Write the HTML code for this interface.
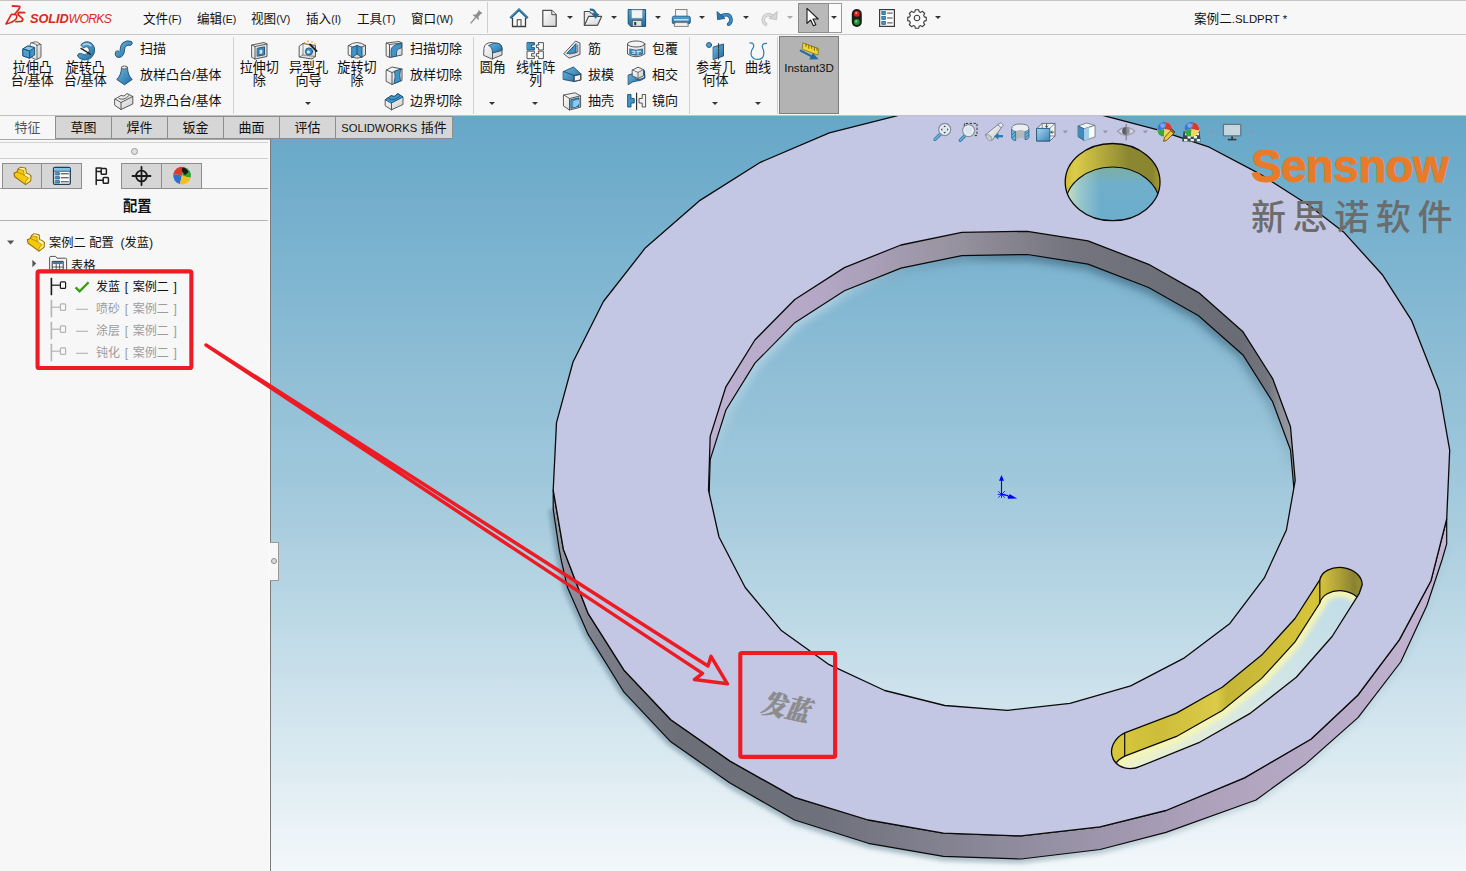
<!DOCTYPE html>
<html lang="zh-CN"><head><meta charset="utf-8"><title>SOLIDWORKS - 案例二.SLDPRT</title>
<style>
html,body{margin:0;padding:0;}
body{width:1466px;height:871px;overflow:hidden;position:relative;background:#f7f7f7;
 font-family:"Liberation Sans","Noto Sans CJK SC",sans-serif;font-size:12.5px;color:#111;}
.a{position:absolute;}
.t{position:absolute;white-space:nowrap;line-height:14px;}
.c{position:absolute;text-align:center;white-space:nowrap;line-height:13px;width:70px;}
.sm{font-size:10.5px;}
.vsep{position:absolute;width:1px;background:#d0d0d0;}
.hsep{position:absolute;height:1px;background:#c6c6c6;}
.tab{position:absolute;z-index:5;top:116px;height:21px;border:1px solid #8e8e8e;border-left:none;background:#d6d6d6;
 text-align:center;line-height:21px;font-size:13px;}
.dd{position:absolute;width:0;height:0;border-left:3px solid transparent;border-right:3px solid transparent;border-top:3px solid #333;}
.ptab{position:absolute;top:163px;height:26px;border:1px solid #8e8e8e;background:#d6d6d6;box-sizing:border-box;}
svg{position:absolute;overflow:visible;}
</style></head><body>
<div class="a" style="left:0;top:0;width:1466px;height:1px;background:#c4c4c4"></div>
<div class="a" style="left:0;top:34px;width:1466px;height:1px;background:#c9c9c9"></div>
<div class="t" style="left:30px;top:11.8px;font-size:12.8px;color:#da291c;font-style:italic;letter-spacing:-0.1px"><b>SOLID</b><span style="letter-spacing:-0.7px;font-size:12.2px">WORKS</span></div>
<div class="t" style="left:143px;top:12px;font-size:12.6px">文件<span class="sm">(F)</span></div>
<div class="t" style="left:197px;top:12px;font-size:12.6px">编辑<span class="sm">(E)</span></div>
<div class="t" style="left:251px;top:12px;font-size:12.6px">视图<span class="sm">(V)</span></div>
<div class="t" style="left:306px;top:12px;font-size:12.6px">插入<span class="sm">(I)</span></div>
<div class="t" style="left:357px;top:12px;font-size:12.6px">工具<span class="sm">(T)</span></div>
<div class="t" style="left:411px;top:12px;font-size:12.6px">窗口<span class="sm">(W)</span></div>
<div class="t" style="left:1194px;top:12px;font-size:12.6px">案例二<span style="font-size:11.4px">.SLDPRT *</span></div>
<div class="vsep" style="left:487px;top:2px;height:31px;background:#cfcfcf"></div>
<div class="a" style="left:798px;top:3px;width:44px;height:30px;box-sizing:border-box;border:1px solid #9a9a9a;background:#fbfbfb"></div>
<div class="a" style="left:798px;top:3px;width:31px;height:30px;box-sizing:border-box;border:1px solid #8c8c8c;background:#b9b9b9"></div>
<div class="dd" style="left:567px;top:16px;border-top-color:#333"></div>
<div class="dd" style="left:611px;top:16px;border-top-color:#333"></div>
<div class="dd" style="left:655px;top:16px;border-top-color:#333"></div>
<div class="dd" style="left:699px;top:16px;border-top-color:#333"></div>
<div class="dd" style="left:743px;top:16px;border-top-color:#333"></div>
<div class="dd" style="left:787px;top:16px;border-top-color:#aaa"></div>
<div class="dd" style="left:831px;top:16px;border-top-color:#333"></div>
<div class="dd" style="left:935px;top:16px;border-top-color:#333"></div>
<svg style="left:0;top:0" width="1466" height="35" viewBox="0 0 1466 35">
<defs>
<linearGradient id="gPaper" x1="0" y1="0" x2="1" y2="1"><stop offset="0" stop-color="#ffffff"/><stop offset="1" stop-color="#d2d2d2"/></linearGradient>
<linearGradient id="gBlue" x1="0" y1="0" x2="0" y2="1"><stop offset="0" stop-color="#5aa7d6"/><stop offset="1" stop-color="#1d6a9c"/></linearGradient>
</defs>
<!-- DS mark -->
<g fill="none" stroke="#da291c" stroke-width="1.8" stroke-linecap="round" stroke-linejoin="round">
<path d="M12.5 6 L19.2 6.3 Q20.6 7 18.6 9.5 L15 14"/>
<path d="M6 24 L11.5 14.2 L15.5 14.6 Q18 15.6 16 19 Q13 22.5 6 24 Z" stroke-width="1.6"/>
<path d="M24.6 12.6 L19.2 12.4 Q17.2 13.4 18.8 15.4 L22.3 18.4 Q23.6 20.4 21.4 21.3 L16 21.6"/>
</g>
<!-- pin -->
<g transform="translate(476 17) rotate(40)"><path d="M-2.6 -7 h5.2 l-0.9 1.6 v3.6 l2.5 2.4 h-8.4 l2.5 -2.4 v-3.6 z" fill="#8d8d8d"/><path d="M0 0.6 V8.4" stroke="#8d8d8d" stroke-width="1.3"/></g>
<!-- home -->
<g><path d="M512.5 18 V26.5 H525.5 V18" fill="#fafafa" stroke="#3c3c3c" stroke-width="1.3"/>
<path d="M510.3 18.2 L519 9.7 L527.7 18.2" fill="none" stroke="#1f5f8b" stroke-width="2.4" stroke-linejoin="miter"/>
<path d="M510.3 17.6 L519 9.2 L527.7 17.6" fill="none" stroke="#4f9ccc" stroke-width="0.9"/>
<rect x="517.2" y="19.7" width="3.8" height="6.6" fill="#fff" stroke="#3c3c3c" stroke-width="1"/></g>
<!-- new doc -->
<path d="M542.8 10.3 H551.8 L556.2 14.7 V26.3 H542.8 Z" fill="url(#gPaper)" stroke="#4a4a4a" stroke-width="1.2" stroke-linejoin="round"/>
<path d="M551.8 10.3 V14.7 H556.2" fill="#eee" stroke="#4a4a4a" stroke-width="1"/>
<!-- open -->
<g><path d="M584.3 11.5 H589.5 L591 13.2 H597 V25.3 H584.3 Z" fill="#e9e9e9" stroke="#4a4a4a" stroke-width="1.1" stroke-linejoin="round"/>
<path d="M584.5 25.3 L588.6 16.4 H601.6 L597.6 25.3 Z" fill="url(#gPaper)" stroke="#4a4a4a" stroke-width="1.1" stroke-linejoin="round"/>
<path d="M589.8 9.6 Q595.4 9.2 595.6 14.4" fill="none" stroke="#1f6b9e" stroke-width="2.2"/>
<path d="M591.7 14 H599.5 L595.6 18.8 Z" fill="#1f6b9e"/></g>
<!-- save -->
<g><path d="M628.2 9.6 H645.6 V26.4 H630.8 L628.2 23.8 Z" fill="url(#gBlue)" stroke="#174f76" stroke-width="1"/>
<rect x="631.6" y="9.9" width="10.8" height="8.3" fill="#f3f3f3" stroke="#8a9aa6" stroke-width="0.6"/>
<rect x="632.4" y="20.6" width="9.4" height="5.6" fill="#e2e2e2" stroke="#555" stroke-width="0.7"/>
<rect x="634.2" y="22" width="2" height="3.2" fill="#333"/></g>
<!-- print -->
<g><rect x="675.6" y="9.6" width="11.4" height="7.4" fill="#f6f6f6" stroke="#777" stroke-width="0.9"/>
<rect x="672.3" y="16.2" width="18" height="7.6" rx="1.6" fill="url(#gBlue)" stroke="#1d5f8c" stroke-width="0.9"/>
<rect x="674" y="19" width="14.6" height="1.6" fill="#bfe0f4"/>
<path d="M675 22.6 H687.6 L688.4 26.4 H674.2 Z" fill="#f4f4f4" stroke="#777" stroke-width="0.9"/></g>
<!-- undo -->
<g><path d="M721.4 16 Q729.8 12.4 731 19.4 Q731.3 22.4 728.6 24.2" fill="none" stroke="#1b5e8d" stroke-width="3.6" stroke-linecap="round"/>
<path d="M721.4 16 Q729.8 12.4 731 19.4 Q731.3 22.4 728.6 24.2" fill="none" stroke="#3d8fc4" stroke-width="2" stroke-linecap="round"/>
<path d="M717 11.6 L717.6 19.6 L725 18.4 Z" fill="#2b79ad" stroke="#1b5e8d" stroke-width="0.9" stroke-linejoin="round"/></g>
<!-- redo (disabled) -->
<g><path d="M772.8 16 Q764.4 12.4 763.2 19.4 Q762.9 22.4 765.6 24.2" fill="none" stroke="#c2c2c2" stroke-width="3.4" stroke-linecap="round"/>
<path d="M772.8 16 Q764.4 12.4 763.2 19.4 Q762.9 22.4 765.6 24.2" fill="none" stroke="#dedede" stroke-width="1.8" stroke-linecap="round"/>
<path d="M777.2 11.6 L776.6 19.6 L769.2 18.4 Z" fill="#d6d6d6" stroke="#c0c0c0" stroke-width="0.9" stroke-linejoin="round"/></g>
<!-- cursor -->
<path d="M807 8.4 V23.4 L810.6 20 L813.4 25.8 L815.8 24.7 L813.1 19 L818.2 19 Z" fill="#fff" stroke="#1a1a1a" stroke-width="1.1" stroke-linejoin="round"/>
<!-- traffic light -->
<g><rect x="851.8" y="9" width="10" height="18" rx="5" fill="#1c1c1c"/>
<circle cx="856.8" cy="13.8" r="2.9" fill="#e02020"/><circle cx="856.2" cy="13" r="1" fill="#ff9a9a"/>
<circle cx="856.8" cy="22" r="2.9" fill="#1f9a2a"/><circle cx="856.2" cy="21.2" r="1" fill="#8fe08f"/></g>
<!-- options -->
<g><rect x="879.6" y="9.6" width="14.8" height="16.8" fill="#fbfbfb" stroke="#3a3a3a" stroke-width="1.2"/>
<g fill="#3d8fc4" stroke="#1b5e8d" stroke-width="0.7"><rect x="881.8" y="11.6" width="3.6" height="3"/><rect x="881.8" y="16.5" width="3.6" height="3"/><rect x="881.8" y="21.4" width="3.6" height="3"/></g>
<g stroke="#444" stroke-width="1"><path d="M887.2 13.1 H892.6 M887.2 18 H892.6 M887.2 22.9 H892.6"/></g></g>
<!-- gear -->
<g transform="translate(917 18)"><path d="M-1.6 -8.3 h3.2 l0.5 2 l1.6 0.7 l1.8 -1.1 l2.2 2.2 l-1.1 1.8 l0.7 1.6 l2 0.5 v3.2 l-2 0.5 l-0.7 1.6 l1.1 1.8 l-2.2 2.2 l-1.8 -1.1 l-1.6 0.7 l-0.5 2 h-3.2 l-0.5 -2 l-1.6 -0.7 l-1.8 1.1 l-2.2 -2.2 l1.1 -1.8 l-0.7 -1.6 l-2 -0.5 v-3.2 l2 -0.5 l0.7 -1.6 l-1.1 -1.8 l2.2 -2.2 l1.8 1.1 l1.6 -0.7 z" fill="#fbfbfb" stroke="#3a3a3a" stroke-width="1.1" stroke-linejoin="round"/><circle r="2.8" fill="#f7f7f7" stroke="#3a3a3a" stroke-width="1.1"/></g>
</svg>
<div class="a" style="left:0;top:115px;width:1466px;height:1px;background:#c2c2c2"></div>
<div class="vsep" style="left:233px;top:37px;height:77px"></div>
<div class="vsep" style="left:473px;top:37px;height:77px"></div>
<div class="vsep" style="left:689px;top:37px;height:77px"></div>
<div class="vsep" style="left:777px;top:37px;height:77px"></div>
<div class="a" style="left:779px;top:36px;width:60px;height:78px;box-sizing:border-box;border:1px solid #7e7e7e;background:#b3b3b3"></div>
<div class="c" style="left:774px;top:61px;font-size:11.6px">Instant3D</div>
<div class="c" style="left:-2.700000000000003px;top:61px;font-size:13.1px">拉伸凸<br>台/基体</div>
<div class="c" style="left:50.3px;top:61px;font-size:13.1px">旋转凸<br>台/基体</div>
<div class="c" style="left:224.3px;top:61px;font-size:13.1px">拉伸切<br>除</div>
<div class="c" style="left:273.6px;top:61px;font-size:13.1px">异型孔<br>向导</div>
<div class="dd" style="left:305px;top:102px"></div>
<div class="c" style="left:322px;top:61px;font-size:13.1px">旋转切<br>除</div>
<div class="c" style="left:457.8px;top:61px;font-size:13.1px">圆角<br></div>
<div class="dd" style="left:489px;top:102px"></div>
<div class="c" style="left:500.6px;top:61px;font-size:13.1px">线性阵<br>列</div>
<div class="dd" style="left:532px;top:102px"></div>
<div class="c" style="left:680.6px;top:61px;font-size:13.1px">参考几<br>何体</div>
<div class="dd" style="left:712px;top:102px"></div>
<div class="c" style="left:723px;top:61px;font-size:13.1px">曲线<br></div>
<div class="dd" style="left:755px;top:102px"></div>
<div class="t" style="left:140px;top:42px;font-size:13px">扫描</div>
<div class="t" style="left:140px;top:68px;font-size:13px">放样凸台/基体</div>
<div class="t" style="left:140px;top:94px;font-size:13px">边界凸台/基体</div>
<div class="t" style="left:410px;top:42px;font-size:13px">扫描切除</div>
<div class="t" style="left:410px;top:68px;font-size:13px">放样切除</div>
<div class="t" style="left:410px;top:94px;font-size:13px">边界切除</div>
<div class="t" style="left:588px;top:42px;font-size:13px">筋</div>
<div class="t" style="left:588px;top:68px;font-size:13px">拔模</div>
<div class="t" style="left:588px;top:94px;font-size:13px">抽壳</div>
<div class="t" style="left:652px;top:42px;font-size:13px">包覆</div>
<div class="t" style="left:652px;top:68px;font-size:13px">相交</div>
<div class="t" style="left:652px;top:94px;font-size:13px">镜向</div>
<svg style="left:0;top:0" width="1466" height="116" viewBox="0 0 1466 116">
<defs>
<linearGradient id="rB" x1="0" y1="0" x2="1" y2="1"><stop offset="0" stop-color="#6db6e0"/><stop offset="1" stop-color="#1f6d9f"/></linearGradient>
<linearGradient id="rW" x1="0" y1="0" x2="1" y2="1"><stop offset="0" stop-color="#ffffff"/><stop offset="1" stop-color="#cfcfcf"/></linearGradient>
</defs>
<g stroke-linejoin="round" stroke-linecap="round">
<!-- extrude boss -->
<g stroke="#555" stroke-width="0.9"><path d="M30.2 44.4 Q30.2 43 31.6 42.6 L35.6 41.8 Q36.6 41.7 37.4 42.2 L40.4 44 Q41 44.5 41 45.4 V56.4 Q41 57.4 40 57.8 L36.6 59.4 Q35.6 59.7 34.8 59.2 L30.2 56.6 Z" fill="url(#rW)"/><path d="M37 45.6 Q37 44.6 36 44.2 L31 42.8 M37 45.6 V59.2 M37 45.2 L40.8 44.4" fill="none" stroke-width="0.8"/></g>
<g stroke="#174f76" stroke-width="0.9"><path d="M23.2 49 L28 46 L34.6 47.6 V55 L29.6 58.2 L23.2 56 Z" fill="#3f94c8"/><path d="M23.2 49 L29.6 51 L34.6 47.6 L28 46 Z" fill="#86c6ea"/><path d="M29.6 51 V58.2" fill="none"/><path d="M23.2 49 L29.6 51 V58.2 L23.2 56 Z" fill="#4da0d2"/></g>
<!-- revolve boss -->
<g><path d="M81 44.6 Q86 39.6 91.5 43.2 Q96 47.5 94 53.5 Q91 60.5 84 59.8 Q79 59 77.4 56 Q78 53 80.6 53.4 Q84.5 56 88 53.4 Q90.5 50.5 88.6 47.6 Q86.5 45.6 83.6 47.6 Z" fill="url(#rB)" stroke="#174f76" stroke-width="0.9"/><path d="M83.5 44.8 Q87.5 42.4 91 45.6" fill="none" stroke="#bfe2f5" stroke-width="1.2"/><path d="M81 48.4 L90.4 54.2" stroke="#1a1a1a" stroke-width="1.3"/></g>
<!-- sweep -->
<path d="M115.5 52 Q114 57 119 57.5 Q124 57 124.5 50 Q125 44 130.5 45.5 Q133.5 44 131.5 41.5 Q127 39.5 122.5 43 Q120 46 120 50.5 Q119.5 52.5 117.5 51 Z" fill="url(#rB)" stroke="#174f76" stroke-width="0.9"/>
<!-- loft -->
<g stroke="#174f76" stroke-width="0.9"><path d="M121.5 67.5 Q121.5 75 116.8 79.5 L124.5 84.8 L132.2 79.5 Q127.5 75 127.5 67.5 Z" fill="url(#rB)"/><ellipse cx="124.5" cy="67.5" rx="3" ry="1.5" fill="#e8e8e8" stroke="#555"/></g>
<!-- boundary boss -->
<g stroke="#4a4a4a" stroke-width="0.9" fill="url(#rW)"><path d="M115 99 L121 95.5 Q124 97.5 127 93.5 L132.8 96.5 V104 L121 109.5 L115 105.5 Z"/><path d="M115 99 L121 102.5 L132.8 96.5 M121 102.5 V109.5" fill="none"/><path d="M119 98.6 Q124 101 129 95.5" fill="none"/></g>
<!-- extrude cut -->
<g stroke="#4a4a4a" stroke-width="0.9"><path d="M252 45 L264 42.5 L267 44 V56.5 L255 59 L252 57.5 Z" fill="url(#rW)"/><path d="M252 45 L255 46.5 L267 44 M255 46.5 V59" fill="none"/><path d="M257.5 48.2 L264.5 46.8 V54.8 L257.5 56.2 Z" fill="#3f94c8" stroke="#174f76"/><path d="M259.3 49.6 L262.8 48.9 V53.8 L259.3 54.5 Z" fill="#cfe8f6" stroke="#174f76" stroke-width="0.6"/></g>
<!-- hole wizard -->
<g stroke="#4a4a4a" stroke-width="0.9"><path d="M299.5 46 L303 43.5 L315.5 45.5 V56.5 L312 59 L299.5 57 Z" fill="url(#rW)"/><path d="M303 43.5 V55 L299.5 57 M303 55 L315.5 56.5" fill="none" stroke-width="0.6"/><circle cx="309" cy="51.5" r="3.6" fill="#3f94c8" stroke="#174f76"/><circle cx="308.4" cy="52" r="1.6" fill="#d8eef9" stroke="none"/><path d="M310 44.5 L316.5 51" stroke="#222" stroke-width="2"/></g>
<g fill="#e8a020"><circle cx="304.5" cy="42.5" r="0.8"/><circle cx="308" cy="41.3" r="0.9"/><circle cx="312" cy="42" r="0.8"/><circle cx="315" cy="44" r="0.8"/><circle cx="306" cy="44.5" r="0.6"/></g>
<!-- revolve cut -->
<g stroke="#4a4a4a" stroke-width="0.9"><path d="M348.5 45.5 Q357 39.5 365.5 45.5 V55 Q357 61.5 348.5 55 Z" fill="url(#rW)"/><path d="M348.5 45.5 Q357 50.5 365.5 45.5" fill="none"/><path d="M352 47.3 L357 45.5 L362 47.3 V57.6 L357 54 L352 57.6 Z" fill="#3f94c8" stroke="#174f76"/><path d="M357 45.5 V54" stroke="#174f76"/></g>
<!-- sweep cut -->
<g stroke="#4a4a4a" stroke-width="0.9"><path d="M386.5 43 L399 41.5 L402 43 V55 L389.5 57.5 L386.5 56 Z" fill="url(#rW)"/><path d="M386.5 43 L389.5 44.5 L402 43 M389.5 44.5 V57.5" fill="none"/><path d="M391 56.8 V50 Q392 45 399 44 L401.5 43.6 V48 Q397 48 396.5 52 V55.7 Z" fill="#3f94c8" stroke="#174f76" stroke-width="0.8"/></g>
<!-- loft cut -->
<g stroke="#4a4a4a" stroke-width="0.9"><path d="M386.5 70 L392 67 L402 69 V80.5 L392 84.5 L386.5 81.5 Z" fill="url(#rW)"/><path d="M386.5 70 L392 72.5 L402 69 M392 72.5 V84.5" fill="none"/><path d="M394.5 71.5 Q396 76 394 83.5 L400.5 81 Q399 75 400.5 69.6 Z" fill="#3f94c8" stroke="#174f76" stroke-width="0.8"/></g>
<!-- boundary cut -->
<g stroke="#4a4a4a" stroke-width="0.9"><path d="M385.5 99.5 L391.5 95.5 Q394.5 98 397.5 93.5 L403 97 V104.5 L391.5 109.8 L385.5 106 Z" fill="url(#rW)"/><path d="M385.5 99.5 L391.5 95.5 Q394.5 98 397.5 93.5 L403 97 L391.5 103 Z" fill="#3f94c8" stroke="#174f76"/><path d="M391.5 103 V109.8" fill="none"/><path d="M389 98.8 Q394.5 101.6 400 96" fill="none" stroke="#174f76" stroke-width="0.7"/></g>
<!-- fillet -->
<g stroke="#4a4a4a" stroke-width="0.9"><path d="M484 48 Q484.5 43 491 42.5 L498.5 43.5 Q502.5 45 502 50.5 V55 L492 59 L484 55.5 Z" fill="url(#rW)"/><path d="M489 45.5 Q495 42 498.8 43.6 Q502.5 45 502 50.5 L492.5 53 Q492.5 47 489 45.5 Z" fill="url(#rB)" stroke="#174f76"/><path d="M492.5 53 V59" fill="none"/></g>
<!-- linear pattern -->
<g stroke-width="0.9" stroke-linejoin="miter"><path d="M527.4 42.6 h7 v2.4 h-2.8 v2.6 h2.8 v2.4 h-7 z" fill="#3f94c8" stroke="#174f76"/><g fill="#fafafa" stroke="#444"><path d="M538.6 42.6 h4.8 v7.4 h-4.8 v-2.4 h-2.2 v-2.6 h2.2 z"/><path d="M527.4 51.2 h7 v2.4 h-2.8 v2.6 h2.8 v2.4 h-7 z"/><path d="M538.6 51.2 h4.8 v7.4 h-4.8 v-2.4 h-2.2 v-2.6 h2.2 z"/></g></g>
<!-- rib -->
<g stroke="#4a4a4a" stroke-width="0.9"><path d="M564 53.5 L575.5 41 L580 43 V54.5 L569.5 58 Z" fill="url(#rW)"/><path d="M567 53.3 L576 43.6 V52.3 Z" fill="#3f94c8" stroke="#174f76"/><path d="M569.5 54.2 L577.7 52 V45" fill="none" stroke-width="0.7"/></g>
<!-- draft -->
<g stroke="#174f76" stroke-width="0.9"><path d="M563.5 71.5 L573.5 67 L581 74 V80 L574 81.5 L563.5 79.5 Z" fill="url(#rB)"/><path d="M563.5 71.5 L574 75.5 L581 74 M574 75.5 V81.5" fill="none"/><path d="M574.5 75.8 L580.6 74.4 V79.8 L574.5 81.2 Z" fill="#f4f4f4" stroke="#444"/></g>
<!-- shell -->
<g stroke="#4a4a4a" stroke-width="0.9"><path d="M563.8 95 L575 92.8 L580.6 95.8 V107.2 L569.5 110 L563.8 106.2 Z" fill="url(#rW)"/><path d="M563.8 95 L569.5 98.5 L580.6 95.8 M569.5 98.5 V110" fill="none"/><path d="M571.2 99.6 L579 97.8 V106.2 L571.2 108.2 Z" fill="#3f94c8" stroke="#174f76"/><path d="M573.2 101 L579 99.8 V104 L576 106.8 L573.2 107.5 Z" fill="#8fcbec" stroke="none"/></g>
<!-- wrap -->
<g stroke="#4a4a4a" stroke-width="0.9"><path d="M627.5 44 V54 Q636 59.5 644.8 54 V44" fill="url(#rW)"/><ellipse cx="636.1" cy="44" rx="8.6" ry="3" fill="#f4f4f4"/><path d="M630 49 Q636 51.5 642.5 49 V54 Q636 56.5 630 54 Z" fill="#3f94c8" stroke="#174f76" stroke-width="0.7"/><path d="M632.5 51.3 h2.4 v2 h-2.4 M638 51.3 v3.2 M637 51.3 h3.6" stroke="#e8f4fb" stroke-width="0.9" fill="none"/></g>
<!-- intersect -->
<g stroke-width="0.9"><path d="M628.5 75 Q633 74 636 72 V79.5 Q640 80 644.5 77.5 V70.5 L645 78 Q640 81.5 636.5 81 Q633 81 628.5 84.5 Z" fill="url(#rB)" stroke="#174f76"/><path d="M632.5 70 L638 67.2 L643.5 69.6 V75.8 L638 78.5 L632.5 76 Z" fill="url(#rW)" stroke="#4a4a4a"/><path d="M632.5 70 L638 72.4 L643.5 69.6 M638 72.4 V78.5" fill="none" stroke="#4a4a4a" stroke-width="0.7"/></g>
<!-- mirror -->
<g stroke-width="0.9"><path d="M628 94.5 h3 v4 h3.2 v4.5 h-3.2 v4 h-3 z" fill="#3f94c8" stroke="#174f76"/><path d="M645.2 94.5 h-3 v4 h-3.2 v4.5 h3.2 v4 h3 z" fill="#f2f2f2" stroke="#444"/><path d="M636.6 93 V109.6" stroke="#222" stroke-width="1.1"/></g>
<!-- reference geometry -->
<g stroke-width="0.9"><path d="M713.5 47 L723.5 44 V56 L713.5 59.5 Z" fill="url(#rB)" stroke="#174f76"/><path d="M718.6 43.5 V60" stroke="#222" stroke-dasharray="1.6 1.2"/><circle cx="709" cy="45" r="2.5" fill="#4fa0d2" stroke="#174f76"/></g>
<!-- curves -->
<path d="M749.8 43 Q754.5 42.6 753.5 47.2 Q750 52 751.5 56 Q753.5 59.6 758 59.4 Q762.5 59.2 763.5 55.5 Q764.5 51 762.5 47.8 Q761.5 43.2 766.5 43.4" fill="none" stroke="#2c7fb2" stroke-width="1.2"/>
<!-- instant3d -->
<g><path d="M803.2 43 L818.6 48.6 L818 55 L802.6 49.4 Z" fill="#f2d432" stroke="#7a6a10" stroke-width="0.7"/><path d="M806 44.2 v2.2 M808.8 45.2 v3 M811.6 46.2 v2.2 M814.4 47.2 v3 M817 48.2 v2.2" stroke="#4a3f00" stroke-width="0.7"/><path d="M800.6 50.6 L812.5 56.8" stroke="#1f6b9e" stroke-width="2"/><path d="M809.2 59.6 L818.6 59.2 L813 53 Z" fill="#1f6b9e"/></g>
</g></svg>
<div class="a" style="left:0;top:116px;width:55px;height:23px;background:#f7f7f7;text-align:center;line-height:23px;font-size:13px;color:#555">特征</div>
<div class="tab" style="left:55px;width:55px;border-left:1px solid #8e8e8e;">草图</div>
<div class="tab" style="left:112px;width:55px;">焊件</div>
<div class="tab" style="left:168px;width:55px;">钣金</div>
<div class="tab" style="left:224px;width:55px;">曲面</div>
<div class="tab" style="left:280px;width:55px;">评估</div>
<div class="tab" style="left:336px;width:116px;"><span style="font-size:11.2px">SOLIDWORKS</span> 插件</div>
<div class="a" style="left:0;top:139px;width:268px;height:732px;background:#f7f7f7"></div>
<div class="a" style="left:268px;top:139px;width:2px;height:732px;background:#f9f9f9"></div>
<div class="a" style="left:0;top:139px;width:270px;height:1px;background:#a8a8a8"></div>
<div class="a" style="left:0;top:142px;width:268px;height:1px;background:#d2d2d2"></div>
<div class="a" style="left:0;top:158px;width:268px;height:1px;background:#cfcfcf"></div>
<div class="a" style="left:131px;top:148px;width:5px;height:5px;border-radius:50%;border:1px solid #9a9a9a;background:#e0e0e0;box-sizing:content-box"></div>
<div class="a" style="left:0;top:188px;width:268px;height:1px;background:#a6a6a6"></div>
<div class="ptab" style="left:2px;width:40px"></div>
<div class="ptab" style="left:41px;width:41px"></div>
<div class="a" style="left:82px;top:163px;width:39px;height:27px;background:#f7f7f7"></div>
<div class="ptab" style="left:121px;width:41px"></div>
<div class="ptab" style="left:161px;width:41px"></div>
<div class="t" style="left:123px;top:198px;font-size:14.3px;font-weight:bold;line-height:16px">配置</div>
<div class="a" style="left:0;top:220px;width:268px;height:1px;background:#b4b4b4"></div>
<div class="t" style="left:49px;top:236px;font-size:12.25px">案例二 配置&nbsp; (发蓝)</div>
<div class="t" style="left:71px;top:259px;font-size:12.3px">表格</div>
<div class="t" style="left:96px;top:280px;font-size:12px;color:#111;word-spacing:1.4px">发蓝 [ 案例二 ]</div>
<div class="t" style="left:96px;top:302px;font-size:12px;color:#9c9c9c;word-spacing:1.4px">喷砂 [ 案例二 ]</div>
<div class="t" style="left:96px;top:324px;font-size:12px;color:#9c9c9c;word-spacing:1.4px">涂层 [ 案例二 ]</div>
<div class="t" style="left:96px;top:346px;font-size:12px;color:#9c9c9c;word-spacing:1.4px">钝化 [ 案例二 ]</div>
<svg style="left:0;top:139px" width="270" height="240" viewBox="0 139 270 240">
<defs><linearGradient id="pY" x1="0" y1="0" x2="1" y2="1"><stop offset="0" stop-color="#ffe45a"/><stop offset="1" stop-color="#e0a800"/></linearGradient></defs>
<g stroke-linejoin="round" stroke-linecap="round">
<!-- tab1 part icon -->
<g id="partIco" stroke-linejoin="miter"><path d="M14 173.3 L17 171.9 L18.1 169.2 L20.5 167.4 L25.6 168.2 L26.3 173.3 L28.6 174 L31 176 L30.7 180.8 L25.6 184.6 L14.7 176.8 Z" fill="#f5c90c" stroke="#96690a" stroke-width="1.1"/>
<path d="M18.5 169.3 L20.6 167.8 L25.2 168.5 L23.3 170.2 Z" fill="#fff6c4"/><path d="M23.5 170.4 L25.3 168.8 L25.9 173.2 L23.9 174.9 Z" fill="#ffe768"/>
<path d="M24.1 175.3 L26.2 173.6 L28.4 174.4 L30.4 176.1 L28.3 177.8 Z" fill="#fff6c4"/><path d="M28.4 178.3 L30.5 176.6 L30.2 180.5 L25.9 183.7 L25.7 181.6 Z" fill="#ffe768"/>
<path d="M18.1 169.2 L23.4 170.2 L24 175.1 L28.4 178 L25.5 181.6 L25.6 184.6 M17 171.9 L24 175.1" fill="none" stroke="#a87c08" stroke-width="0.7"/></g>
<!-- tab2 property icon -->
<g><rect x="53.5" y="167.4" width="16.8" height="17" rx="1.4" fill="#fdfdfd" stroke="#1f3f5c" stroke-width="1.3"/><rect x="54.1" y="168" width="15.6" height="2.8" fill="#7ec4e8"/><path d="M53.5 171.2 H70.3" stroke="#1f3f5c" stroke-width="0.9"/>
<g fill="#4a9ccc" stroke="#1b4e7d" stroke-width="0.7"><rect x="55.6" y="172.6" width="3.8" height="2.4"/><rect x="55.6" y="176.6" width="3.8" height="2.4"/><rect x="55.6" y="180.6" width="3.8" height="2.4"/></g><path d="M61.2 173.8 H68.4 M61.2 177.8 H68.4 M61.2 181.8 H68.4" stroke="#333" stroke-width="1"/></g>
<!-- tab3 config icon -->
<g fill="#fafafa" stroke="#1e1e1e" stroke-width="1.5"><path d="M96.2 168 V184.6 M97 171.5 H102 M97 180.3 H104" fill="none"/><path d="M97 168 h4.2" fill="none"/><rect x="101.2" y="168.6" width="5.2" height="5.6" rx="0.8"/><rect x="103.2" y="177.6" width="5.2" height="5.6" rx="0.8"/></g>
<!-- tab4 crosshair -->
<g fill="none" stroke="#1a1a1a"><circle cx="141.5" cy="176" r="5.4" stroke-width="1.8"/><path d="M141.5 167 V185 M132.5 176 H150.5" stroke-width="1.8"/></g>
<!-- tab5 appearance ball -->
<g><circle cx="182" cy="175.5" r="8.8" fill="#e8e8e8"/><path d="M182 175.5 L173.3 174 A8.8 8.8 0 0 1 184 166.9 Z" fill="#e03a2a"/><path d="M182 175.5 L173.3 174 A8.8 8.8 0 0 0 180 184.1 Z" fill="#2e6fd0"/><path d="M182 175.5 L180 184.1 A8.8 8.8 0 0 0 190.6 177.5 Z" fill="#f0c020"/><path d="M182 175.5 L190.6 177.5 A8.8 8.8 0 0 0 184 166.9 Z" fill="#2fa33a"/><ellipse cx="185.6" cy="172" rx="2.6" ry="5" transform="rotate(-38 185.6 172)" fill="#1a1a1a"/><path d="M180 184.1 A8.8 8.8 0 0 0 190.6 177.5 L182 175.5 Z" fill="#f0c020"/><path d="M184.2 176 L190.6 177.5 A8.8 8.8 0 0 0 189.6 171 Z" fill="#2fa33a"/></g>
<!-- tree arrows -->
<path d="M7 240.4 H14.2 L10.6 244.4 Z" fill="#555" stroke="none"/>
<path d="M32.4 259.8 L36.2 263.5 L32.4 267.2 Z" fill="#555" stroke="none"/>
<!-- tree part icon -->
<use href="#partIco" transform="translate(13.4 66.5)"/>
<!-- folder/table icon -->
<g><path d="M49.6 269.5 V257.6 Q49.6 256.4 50.8 256.4 H55.6 L57 258.2 H65.4 Q66.6 258.2 66.6 259.4 V269.5" fill="#f4f4f4" stroke="#555" stroke-width="1"/><rect x="52.6" y="261.4" width="10.6" height="8.4" fill="#fff" stroke="#333" stroke-width="1"/><rect x="53.1" y="261.9" width="9.6" height="2.2" fill="#2f7fb4"/><path d="M56.2 264.4 V269.6 M59.6 264.4 V269.6 M52.8 267 H63" stroke="#333" stroke-width="0.8"/></g>
</g>
<g fill="none" stroke="#1a1a1a" stroke-width="1.2"><path d="M51.4 277.8 V295.2" stroke-width="1.6"/><path d="M52 285.2 H60.4"/><rect x="60.4" y="281.8" width="5.2" height="6.6" rx="1" fill="#f7f7f7"/></g>
<path d="M75.6 287.40000000000003 L79.6 291.40000000000003 L88.6 282.2" fill="none" stroke="#3a9c14" stroke-width="2.3" stroke-linejoin="miter"/>
<g fill="none" stroke="#b4b4b4" stroke-width="1.2"><path d="M51.4 299.8 V317.2" stroke-width="1.6"/><path d="M52 307.2 H60.4"/><rect x="60.4" y="303.8" width="5.2" height="6.6" rx="1" fill="#f7f7f7"/></g>
<path d="M76 309.3 H88" stroke="#b8b8b8" stroke-width="1.2"/>
<g fill="none" stroke="#b4b4b4" stroke-width="1.2"><path d="M51.4 321.8 V339.2" stroke-width="1.6"/><path d="M52 329.2 H60.4"/><rect x="60.4" y="325.8" width="5.2" height="6.6" rx="1" fill="#f7f7f7"/></g>
<path d="M76 331.3 H88" stroke="#b8b8b8" stroke-width="1.2"/>
<g fill="none" stroke="#b4b4b4" stroke-width="1.2"><path d="M51.4 343.8 V361.2" stroke-width="1.6"/><path d="M52 351.2 H60.4"/><rect x="60.4" y="347.8" width="5.2" height="6.6" rx="1" fill="#f7f7f7"/></g>
<path d="M76 353.3 H88" stroke="#b8b8b8" stroke-width="1.2"/>
</svg>
<svg style="left:270px;top:116px;overflow:hidden" width="1196" height="755" viewBox="270 116 1196 755">
<defs>
<linearGradient id="bg" gradientUnits="userSpaceOnUse" x1="0" y1="116" x2="0" y2="871"><stop offset="0" stop-color="#66a7c8"/><stop offset="0.5" stop-color="#a2c9dc"/><stop offset="1" stop-color="#f3f8fa"/></linearGradient>
<linearGradient id="gSide" gradientUnits="userSpaceOnUse" x1="553" y1="0" x2="1447" y2="0"><stop offset="0" stop-color="#9a9ba8"/><stop offset="0.05" stop-color="#7c7e8a"/><stop offset="0.14" stop-color="#6c6e78"/><stop offset="0.3" stop-color="#6e707b"/><stop offset="0.5" stop-color="#8d8a9b"/><stop offset="0.72" stop-color="#aca0bb"/><stop offset="1" stop-color="#c3b5d3"/></linearGradient>
<linearGradient id="gWall" gradientUnits="userSpaceOnUse" x1="708" y1="0" x2="1295" y2="0"><stop offset="0" stop-color="#beb1d1"/><stop offset="0.2" stop-color="#b3a7c5"/><stop offset="0.42" stop-color="#97929f"/><stop offset="0.62" stop-color="#73747e"/><stop offset="0.9" stop-color="#6a6c75"/><stop offset="0.955" stop-color="#74767f"/><stop offset="0.975" stop-color="#8e9099"/><stop offset="1" stop-color="#9a9ca6"/></linearGradient>
<linearGradient id="gYel" gradientUnits="userSpaceOnUse" x1="1066" y1="0" x2="1160" y2="0"><stop offset="0" stop-color="#d0be34"/><stop offset="0.1" stop-color="#dccc4c"/><stop offset="0.2" stop-color="#cdbf44"/><stop offset="0.45" stop-color="#aaa23a"/><stop offset="0.66" stop-color="#8c8832"/><stop offset="0.92" stop-color="#8a8530"/><stop offset="1" stop-color="#a99d30"/></linearGradient>
<clipPath id="cInner"><path d="M961.8 232.4 L900.9 245.0 L844.4 267.6 L794.8 299.5 L754.9 340.0 L725.9 386.8 L710.2 436.4 L708.5 490.1 L719.0 537.0 L745.2 587.5 L781.0 630.2 L829.2 664.7 L884.7 690.5 L944.7 705.5 L1007.5 710.4 L1070.0 703.3 L1130.7 685.9 L1184.5 657.8 L1229.9 623.4 L1264.3 577.9 L1286.4 530.0 L1295.2 480.5 L1290.5 426.8 L1272.6 378.6 L1243.0 331.8 L1198.6 292.6 L1148.6 264.3 L1088.0 240.9 L1027.4 231.3 Z"/></clipPath>
<linearGradient id="gShadow" gradientUnits="userSpaceOnUse" x1="708" y1="0" x2="1295" y2="0"><stop offset="0" stop-color="#dde8f4" stop-opacity="0.7"/><stop offset="0.22" stop-color="#c8dcec" stop-opacity="0.6"/><stop offset="0.36" stop-color="#6a8ca4" stop-opacity="0.4"/><stop offset="0.5" stop-color="#34566c" stop-opacity="0.6"/><stop offset="1" stop-color="#34566c" stop-opacity="0.62"/></linearGradient>
<linearGradient id="gOutSh" gradientUnits="userSpaceOnUse" x1="553" y1="0" x2="1447" y2="0"><stop offset="0" stop-color="#4f6f84" stop-opacity="0.5"/><stop offset="0.5" stop-color="#4f6f84" stop-opacity="0.42"/><stop offset="0.8" stop-color="#4f6f84" stop-opacity="0.15"/><stop offset="1" stop-color="#4f6f84" stop-opacity="0.05"/></linearGradient>
<linearGradient id="gSlotGlow" gradientUnits="userSpaceOnUse" x1="1110" y1="0" x2="1365" y2="0"><stop offset="0" stop-color="#f2f5c0" stop-opacity="0.85"/><stop offset="0.3" stop-color="#f0f4c4" stop-opacity="0.55"/><stop offset="0.6" stop-color="#eef3c8" stop-opacity="0.2"/><stop offset="1" stop-color="#eef3c8" stop-opacity="0"/></linearGradient>
<linearGradient id="gShM" gradientUnits="userSpaceOnUse" x1="0" y1="330" x2="0" y2="480"><stop offset="0" stop-color="#fff"/><stop offset="1" stop-color="#000"/></linearGradient>
<mask id="mSh" maskUnits="userSpaceOnUse" x="690" y="220" width="620" height="520"><rect x="690" y="220" width="620" height="520" fill="url(#gShM)"/></mask>
<clipPath id="cInnerB"><path d="M961.8 255.6 L900.9 268.2 L844.4 290.8 L794.8 322.7 L754.9 363.2 L725.9 410.0 L710.2 459.6 L708.5 513.3 L719.0 560.2 L745.2 610.7 L781.0 653.4 L829.2 687.9 L884.7 713.7 L944.7 728.7 L1007.5 733.6 L1070.0 726.5 L1130.7 709.1 L1184.5 681.0 L1229.9 646.6 L1264.3 601.1 L1286.4 553.2 L1295.2 503.7 L1290.5 450.0 L1272.6 401.8 L1243.0 355.0 L1198.6 315.8 L1148.6 287.5 L1088.0 264.1 L1027.4 254.5 Z"/></clipPath>
<filter id="blur4" x="-20%" y="-20%" width="140%" height="140%"><feGaussianBlur stdDeviation="4"/></filter>
<filter id="blur2" x="-20%" y="-20%" width="140%" height="140%"><feGaussianBlur stdDeviation="2.2"/></filter>
<linearGradient id="gHoleBg" gradientUnits="userSpaceOnUse" x1="0" y1="165" x2="0" y2="222"><stop offset="0" stop-color="#7fae9c"/><stop offset="0.35" stop-color="#6fafcc"/><stop offset="1" stop-color="#6dadcd"/></linearGradient>
<linearGradient id="gHoleGlow" gradientUnits="userSpaceOnUse" x1="1066" y1="0" x2="1100" y2="0"><stop offset="0" stop-color="#e8f0b8" stop-opacity="0.8"/><stop offset="0.4" stop-color="#cfe6c8" stop-opacity="0.45"/><stop offset="1" stop-color="#cfe6c8" stop-opacity="0"/></linearGradient>
<linearGradient id="gYel2" gradientUnits="userSpaceOnUse" x1="1110" y1="0" x2="1364" y2="0"><stop offset="0" stop-color="#d9c83c"/><stop offset="0.2" stop-color="#cdbd3a"/><stop offset="0.42" stop-color="#dccb48"/><stop offset="0.46" stop-color="#c6b636"/><stop offset="0.8" stop-color="#d6c43a"/><stop offset="0.84" stop-color="#d0be3c"/><stop offset="0.9" stop-color="#b0a238"/><stop offset="0.96" stop-color="#8a8230"/><stop offset="1" stop-color="#9c9234"/></linearGradient>
<linearGradient id="gSlotBg" gradientUnits="userSpaceOnUse" x1="0" y1="560" x2="0" y2="750"><stop offset="0" stop-color="#bddbe8"/><stop offset="1" stop-color="#d7e8f0"/></linearGradient>
</defs>
<rect x="270" y="116" width="1196" height="755" fill="url(#bg)"/>
<path d="M553.2 509.4 L559.2 549.4 L561.2 560.0 L567.5 587.5 L588.2 634.4 L624.0 692.2 L670.8 741.8 L730.0 783.1 L794.6 820.0 L868.3 843.3 L943.4 856.4 L1021.0 859.0 L1100.0 849.5 L1166.0 832.4 L1256.0 800.0 L1305.7 763.9 L1358.0 717.6 L1400.7 662.0 L1426.9 605.5 L1442.0 560.0 L1446.7 543.9" fill="none" stroke="url(#gOutSh)" stroke-width="9" filter="url(#blur2)"/>
<path d="M553.2 490.1 L563.4 549.4 L567.5 560.0 L588.2 613.7 L624.0 670.2 L670.8 719.8 L730.0 761.1 L794.6 797.4 L868.3 820.0 L943.4 833.2 L1021.0 835.9 L1100.0 826.9 L1166.0 810.5 L1245.0 777.6 L1311.2 739.0 L1358.0 695.0 L1399.3 639.9 L1431.0 580.7 L1446.7 519.0 L1446.7 543.9 L1442.0 560.0 L1426.9 605.5 L1400.7 662.0 L1358.0 717.6 L1305.7 763.9 L1256.0 800.0 L1166.0 832.4 L1100.0 849.5 L1021.0 859.0 L943.4 856.4 L868.3 843.3 L794.6 820.0 L730.0 783.1 L670.8 741.8 L624.0 692.2 L588.2 634.4 L567.5 587.5 L561.2 560.0 L559.2 549.4 L553.2 509.4 Z" fill="url(#gSide)" stroke="#0a0a0a" stroke-width="1.2" stroke-linejoin="round"/>
<path d="M892.6 116.9 L829.3 132.9 L760.4 162.3 L699.2 200.9 L645.5 247.7 L603.4 301.5 L573.0 362.0 L556.5 422.6 L553.2 490.1 L563.4 549.4 L567.5 560.0 L588.2 613.7 L624.0 670.2 L670.8 719.8 L730.0 761.1 L794.6 797.4 L868.3 820.0 L943.4 833.2 L1021.0 835.9 L1100.0 826.9 L1166.0 810.5 L1245.0 777.6 L1311.2 739.0 L1358.0 695.0 L1399.3 639.9 L1431.0 580.7 L1446.7 519.0 L1449.7 450.2 L1439.3 391.0 L1411.7 320.7 L1382.8 275.3 L1344.2 232.6 L1308.4 205.0 L1258.8 173.4 L1209.3 147.2 L1156.9 129.6 L1108.4 116.9 L1071.0 106.7 L1000.0 98.0 L930.0 107.0 Z" fill="#c4c7e3" stroke="#0a0a0a" stroke-width="1.3" stroke-linejoin="round"/>
<path d="M961.8 232.4 L900.9 245.0 L844.4 267.6 L794.8 299.5 L754.9 340.0 L725.9 386.8 L710.2 436.4 L708.5 490.1 L719.0 537.0 L745.2 587.5 L781.0 630.2 L829.2 664.7 L884.7 690.5 L944.7 705.5 L1007.5 710.4 L1070.0 703.3 L1130.7 685.9 L1184.5 657.8 L1229.9 623.4 L1264.3 577.9 L1286.4 530.0 L1295.2 480.5 L1290.5 426.8 L1272.6 378.6 L1243.0 331.8 L1198.6 292.6 L1148.6 264.3 L1088.0 240.9 L1027.4 231.3 Z" fill="url(#gWall)"/>
<g clip-path="url(#cInner)"><path d="M961.8 255.6 L900.9 268.2 L844.4 290.8 L794.8 322.7 L754.9 363.2 L725.9 410.0 L710.2 459.6 L708.5 513.3 L719.0 560.2 L745.2 610.7 L781.0 653.4 L829.2 687.9 L884.7 713.7 L944.7 728.7 L1007.5 733.6 L1070.0 726.5 L1130.7 709.1 L1184.5 681.0 L1229.9 646.6 L1264.3 601.1 L1286.4 553.2 L1295.2 503.7 L1290.5 450.0 L1272.6 401.8 L1243.0 355.0 L1198.6 315.8 L1148.6 287.5 L1088.0 264.1 L1027.4 254.5 Z" fill="url(#bg)"/><g clip-path="url(#cInnerB)"><g mask="url(#mSh)"><path d="M961.8 255.6 L900.9 268.2 L844.4 290.8 L794.8 322.7 L754.9 363.2 L725.9 410.0 L710.2 459.6 L708.5 513.3 L719.0 560.2 L745.2 610.7 L781.0 653.4 L829.2 687.9 L884.7 713.7 L944.7 728.7 L1007.5 733.6 L1070.0 726.5 L1130.7 709.1 L1184.5 681.0 L1229.9 646.6 L1264.3 601.1 L1286.4 553.2 L1295.2 503.7 L1290.5 450.0 L1272.6 401.8 L1243.0 355.0 L1198.6 315.8 L1148.6 287.5 L1088.0 264.1 L1027.4 254.5 Z" fill="none" stroke="url(#gShadow)" stroke-width="11" filter="url(#blur4)"/></g></g><path d="M961.8 255.6 L900.9 268.2 L844.4 290.8 L794.8 322.7 L754.9 363.2 L725.9 410.0 L710.2 459.6 L708.5 513.3 L719.0 560.2 L745.2 610.7 L781.0 653.4 L829.2 687.9 L884.7 713.7 L944.7 728.7 L1007.5 733.6 L1070.0 726.5 L1130.7 709.1 L1184.5 681.0 L1229.9 646.6 L1264.3 601.1 L1286.4 553.2 L1295.2 503.7 L1290.5 450.0 L1272.6 401.8 L1243.0 355.0 L1198.6 315.8 L1148.6 287.5 L1088.0 264.1 L1027.4 254.5 Z" fill="none" stroke="#0a0a0a" stroke-width="1.2"/></g>
<path d="M961.8 232.4 L900.9 245.0 L844.4 267.6 L794.8 299.5 L754.9 340.0 L725.9 386.8 L710.2 436.4 L708.5 490.1 L719.0 537.0 L745.2 587.5 L781.0 630.2 L829.2 664.7 L884.7 690.5 L944.7 705.5 L1007.5 710.4 L1070.0 703.3 L1130.7 685.9 L1184.5 657.8 L1229.9 623.4 L1264.3 577.9 L1286.4 530.0 L1295.2 480.5 L1290.5 426.8 L1272.6 378.6 L1243.0 331.8 L1198.6 292.6 L1148.6 264.3 L1088.0 240.9 L1027.4 231.3 Z" fill="none" stroke="#0a0a0a" stroke-width="1.3" stroke-linejoin="round"/>
<clipPath id="cHole"><ellipse cx="1112.6" cy="182.1" rx="47.4" ry="38.6"/></clipPath>
<g clip-path="url(#cHole)"><rect x="1060" y="140" width="106" height="86" fill="url(#gYel)"/><ellipse cx="1112.6" cy="205.6" rx="47.4" ry="38.6" fill="url(#gHoleBg)"/><ellipse cx="1112.6" cy="205.6" rx="47.4" ry="38.6" fill="url(#gHoleGlow)"/><ellipse cx="1112.6" cy="205.6" rx="47.4" ry="38.6" fill="none" stroke="#0a0a0a" stroke-width="1.2"/></g>
<ellipse cx="1112.6" cy="182.1" rx="47.4" ry="38.6" fill="none" stroke="#0a0a0a" stroke-width="1.3"/>
<clipPath id="cSlot"><path d="M1124.7 732.8 L1176.5 713.1 L1222.2 687.2 L1261.7 655.1 L1295.0 618.5 L1319.8 579.8 A21.4 16 6.6 0 1 1362.2 584.7 L1359.3 593.3 L1332.1 636.5 L1296.3 677.3 L1250.6 713.1 L1198.8 742.7 L1140.7 766.2 A18.5 21.7 64.4 0 1 1124.7 732.8 Z"/></clipPath>
<g clip-path="url(#cSlot)"><rect x="1105" y="560" width="265" height="212" fill="url(#gYel2)"/><g transform="translate(0 23.3)"><path d="M1124.7 732.8 L1176.5 713.1 L1222.2 687.2 L1261.7 655.1 L1295.0 618.5 L1319.8 579.8 A21.4 16 6.6 0 1 1362.2 584.7 L1359.3 593.3 L1332.1 636.5 L1296.3 677.3 L1250.6 713.1 L1198.8 742.7 L1140.7 766.2 A18.5 21.7 64.4 0 1 1124.7 732.8 Z" fill="url(#gSlotBg)"/><path d="M1124.7 732.8 L1176.5 713.1 L1222.2 687.2 L1261.7 655.1 L1295.0 618.5 L1319.8 579.8 A21.4 16 6.6 0 1 1362.2 584.7 L1359.3 593.3 L1332.1 636.5 L1296.3 677.3 L1250.6 713.1 L1198.8 742.7 L1140.7 766.2 A18.5 21.7 64.4 0 1 1124.7 732.8 Z" fill="url(#gSlotGlow)"/><path d="M1124.7 732.8 L1176.5 713.1 L1222.2 687.2 L1261.7 655.1 L1295.0 618.5 L1319.8 579.8 A21.4 16 6.6 0 1 1362.2 584.7 L1359.3 593.3 L1332.1 636.5 L1296.3 677.3 L1250.6 713.1 L1198.8 742.7 L1140.7 766.2 A18.5 21.7 64.4 0 1 1124.7 732.8 Z" fill="none" stroke="#f6f6b4" stroke-opacity="0.95" stroke-width="13" filter="url(#blur2)" clip-path="url(#cSlot)"/><path d="M1124.7 732.8 L1176.5 713.1 L1222.2 687.2 L1261.7 655.1 L1295.0 618.5 L1319.8 579.8 A21.4 16 6.6 0 1 1362.2 584.7 L1359.3 593.3 L1332.1 636.5 L1296.3 677.3 L1250.6 713.1 L1198.8 742.7 L1140.7 766.2 A18.5 21.7 64.4 0 1 1124.7 732.8 Z" fill="none" stroke="#0a0a0a" stroke-width="1.2"/></g><path d="M1124.7 732.8 V756.5 M1319.8 579.8 V603" stroke="#0a0a0a" stroke-width="1.2"/></g>
<path d="M1124.7 732.8 L1176.5 713.1 L1222.2 687.2 L1261.7 655.1 L1295.0 618.5 L1319.8 579.8 A21.4 16 6.6 0 1 1362.2 584.7 L1359.3 593.3 L1332.1 636.5 L1296.3 677.3 L1250.6 713.1 L1198.8 742.7 L1140.7 766.2 A18.5 21.7 64.4 0 1 1124.7 732.8 Z" fill="none" stroke="#0a0a0a" stroke-width="1.3" stroke-linejoin="round"/>
<g stroke="#0000ff" stroke-width="1.1" fill="#0000ff" stroke-linecap="butt"><path d="M1001.5 494.4 V479 M1001.5 494.4 L1008 495.6" fill="none"/><path d="M999 480.8 L1001.5 475 L1004 480.8 Z M1007.6 496.6 L1009.8 494.2 L1017.2 498.4 L1008 498.8 Z" stroke="none"/><path d="M998.2 491.2 L1004.8 497.6 M1004.8 491.2 L998.2 497.6 M997.6 494.4 H1005.4 M1001.5 494.4 V498" stroke-width="0.8" fill="none"/></g>
<g transform="translate(787.5 708) rotate(12) skewX(-12) scale(0.93 1.06)"><text x="0" y="9" text-anchor="middle" style="font-family:'Liberation Serif','Noto Serif CJK SC',serif;font-weight:900;font-size:26px" fill="#8b8b8e" stroke="#8b8b8e" stroke-width="0.5">发蓝</text></g>
</svg>
<div class="a" style="left:270px;top:139px;width:1px;height:732px;background:#7a7a7a"></div>
<div class="a" style="left:270px;top:542px;width:9px;height:39px;box-sizing:border-box;border:1px solid #9a9a9a;border-left:none;background:#f7f7f7"></div>
<div class="a" style="left:271px;top:558px;width:4px;height:4px;border-radius:50%;border:1px solid #8a8a8a;background:#dcdcdc"></div>
<svg style="left:0;top:0;z-index:8" width="1466" height="871" viewBox="0 0 1466 871">
<rect x="37.55" y="271.35" width="153.8" height="96.7" rx="1.6" fill="none" stroke="#ed1c24" stroke-width="4.1"/>
<rect x="740.3" y="653" width="94.8" height="103.9" rx="1.5" fill="none" stroke="#ed1c24" stroke-width="4.1"/>
<path d="M206 345 L708 666 L711 656.4 L727.4 683.8 L694.4 679.6 L702.5 673.4 Z" fill="none" stroke="#ed1c24" stroke-width="3.5" stroke-linejoin="round"/>
</svg>
<div class="t" style="left:1251px;top:140.5px;font-size:46px;line-height:50px;font-weight:bold;color:#e87b2a;letter-spacing:-0.7px;-webkit-text-stroke:0.9px #e87b2a">Sensnow</div>
<div class="t" style="left:1251px;top:193px;font-size:35px;line-height:50px;color:#6c6c6c;letter-spacing:6.6px;font-weight:500">新思诺软件</div>
<svg style="left:925px;top:118px;z-index:7" width="340" height="28" viewBox="925 118 340 28">
<defs>
<linearGradient id="hB" x1="0" y1="0" x2="1" y2="1"><stop offset="0" stop-color="#a8d4ee"/><stop offset="1" stop-color="#3a86b8"/></linearGradient>
<linearGradient id="hG" x1="0" y1="0" x2="1" y2="1"><stop offset="0" stop-color="#ffffff"/><stop offset="1" stop-color="#c4c8cc"/></linearGradient>
</defs>
<g stroke-linejoin="round" stroke-linecap="round">
<!-- zoom to fit -->
<g><path d="M940.6 134 L935 139.4" stroke="#2e78a6" stroke-width="3.2"/><path d="M940.6 134 L935 139.4" stroke="#6eb4da" stroke-width="1.6"/><circle cx="944.7" cy="129.5" r="6" fill="#dbe6ef" stroke="#8792a0" stroke-width="1.3"/><circle cx="944.7" cy="129.5" r="4.6" fill="none" stroke="#f4f8fb" stroke-width="0.8"/><path d="M943.5 127 L944.7 125.6 L945.9 127 Z M943.5 132 L944.7 133.4 L945.9 132 Z M942.2 128.3 L940.8 129.5 L942.2 130.7 Z M947.2 128.3 L948.6 129.5 L947.2 130.7 Z" fill="#333" stroke="none"/></g>
<!-- zoom to area -->
<g><path d="M964.6 136 L960.2 140.3" stroke="#2e78a6" stroke-width="3.2"/><path d="M964.6 136 L960.2 140.3" stroke="#6eb4da" stroke-width="1.6"/><path d="M964.4 126 V123.4 H977 V135.6 H974.6" fill="none" stroke="#333" stroke-width="1" stroke-dasharray="2.4 1.5" stroke-linecap="butt"/><circle cx="968.6" cy="130.6" r="6" fill="#dbe6ef" stroke="#8792a0" stroke-width="1.3"/><circle cx="968.6" cy="130.6" r="4.6" fill="none" stroke="#f4f8fb" stroke-width="0.8"/></g>
<!-- previous view -->
<g><path d="M985.6 134.6 L998.6 124.2 L1001.6 127.4 L992.6 139.8 Q988 141.4 985.6 134.6 Z" fill="url(#hG)" stroke="#707884" stroke-width="0.9"/><path d="M998.2 124.4 L1001 122.6 L1003.2 125.2 L1001.4 127.6 Z" fill="#eef0f2" stroke="#707884" stroke-width="0.8"/><ellipse cx="989" cy="137.6" rx="2.2" ry="3.6" transform="rotate(-38 989 137.6)" fill="#c8ccd2" stroke="#8a929c" stroke-width="0.7"/><path d="M1003 136.2 H997.6" stroke="#2a79ad" stroke-width="2.2" stroke-linecap="butt"/><path d="M998.4 132.8 L994 136.2 L998.4 139.6 Z" fill="#2a79ad"/></g>
<!-- section view -->
<g><path d="M1011.8 128.2 Q1011.8 124 1020.2 124 Q1028.8 124 1028.8 128.2 V137.4 Q1028.8 139 1025.4 139.6 V131.8 H1015.6 V140.6 Q1011.8 140 1011.8 138.2 Z" fill="#eceef0" stroke="#6a727c" stroke-width="0.9"/><path d="M1015.6 131.4 Q1020.2 128.6 1025.4 131.4 V139 Q1020.2 136.8 1015.6 140 Z" fill="#b4b8be"/><path d="M1011.8 129.6 Q1013 131 1015.6 131.4 V140.6 Q1011.8 140 1011.8 138.2 Z M1025.4 131.4 Q1028 130.8 1028.8 129.4 V137.4 Q1028.8 139 1025.4 139.6 Z" fill="#6fb6dc" stroke="#2a6a94" stroke-width="0.7"/><path d="M1012.4 134.6 l2.8 -2.6 M1012.4 137.8 l2.8 -2.6 M1025.9 134.2 l2.6 -2.6 M1025.9 137.4 l2.6 -2.6" stroke="#1f5f8b" stroke-width="0.8"/></g>
<!-- view orientation -->
<g><path d="M1037 128.4 L1042.2 123.4 H1055 V136 L1049.8 141 H1037 Z" fill="#f2f4f6" stroke="#5a626c" stroke-width="0.9"/><path d="M1055 123.4 L1049.8 128.4 M1042.2 123.4 V128.4 M1049.8 136 H1055" stroke="#5a626c" stroke-width="0.7" fill="none"/><path d="M1037 128.4 H1049.8 V141 H1037 Z" fill="url(#hB)" stroke="#2a5f85" stroke-width="1"/><path d="M1046.6 124.2 v3 M1045.4 126 l1.2 1.4 l1.2 -1.4 M1053.8 132.2 h-3 M1052.2 131 l-1.4 1.2 l1.4 1.2" stroke="#333" stroke-width="0.8" fill="none"/></g>
<!-- display style -->
<g><path d="M1078.4 126 L1086.6 123 L1095 125.3 L1084.2 128.9 Z" fill="#f1f4f7" stroke="#6a727c" stroke-width="0.8"/><path d="M1078.4 126 L1084.2 128.9 V140.5 L1078.4 136.9 Z" fill="#3f8cbe" stroke="#2a5f85" stroke-width="0.8"/><path d="M1084.2 128.9 L1095 125.3 V137 L1084.2 140.5 Z" fill="#fafbfc" stroke="#6a727c" stroke-width="0.8"/><path d="M1084.2 128.9 L1089 127.3 V139 L1084.2 140.5 Z" fill="#9fd0ea" stroke="none"/></g>
<!-- hide/show -->
<g><path d="M1117.4 131.2 Q1126 123.4 1134.8 131.2 Q1126 139 1117.4 131.2 Z" fill="#d9dae2" stroke="#9a9ba8" stroke-width="1.2"/><circle cx="1126" cy="131" r="3.8" fill="#8e8f9c"/><path d="M1126 127.2 A3.8 3.8 0 0 0 1126 134.8 Z" fill="#5c5d6a"/><path d="M1126.2 124.4 V140" stroke="#74757f" stroke-width="1"/></g>
<!-- edit appearance -->
<g><circle cx="1164.6" cy="129.2" r="7.4" fill="#f0f0e8"/><path d="M1164.6 129.2 L1157.3 130.4 A7.4 7.4 0 0 1 1166 121.9 Z" fill="#3a78d4"/><path d="M1164.6 129.2 L1166 121.9 A7.4 7.4 0 0 1 1171.9 130.4 Z" fill="#d63a30"/><path d="M1164.6 129.2 L1157.3 130.4 A7.4 7.4 0 0 0 1164 136.6 Z" fill="#35a83c"/><path d="M1164.6 129.2 L1171.9 130.4 A7.4 7.4 0 0 1 1164 136.6 Z" fill="#f0d85a"/><circle cx="1162.6" cy="125.6" r="2.4" fill="#fff" fill-opacity="0.35"/><path d="M1172.2 129.6 L1175 132 L1167 140.2 L1163.6 141.4 L1164.4 137.8 Z" fill="#f2c838" stroke="#4a3c10" stroke-width="0.8"/><path d="M1172.2 129.6 L1175 132 L1173.6 133.4 L1170.9 131 Z" fill="#c04a3a" stroke="#4a3c10" stroke-width="0.6"/></g>
<!-- apply scene -->
<g><path d="M1183.6 131 H1199.4 L1200.8 141.4 H1182.2 Z" fill="#37474f"/><path d="M1185 133 h3 v2.2 h-3 z M1191 133 h3 v2.2 h-3 z M1196.4 133 h2.6 v2.2 h-2.6 z M1187.6 136 h3.2 v2.4 h-3.2 z M1193.8 136 h3.2 v2.4 h-3.2 z M1184 139 h3.4 v2.2 h-3.4 z M1190.6 139 h3.4 v2.2 h-3.4 z M1196.8 139 h3.4 v2.2 h-3.4 z" fill="#e8ecee"/><circle cx="1191.7" cy="129.2" r="7.4" fill="#f0f0e8"/><path d="M1191.7 129.2 L1184.4 130.4 A7.4 7.4 0 0 1 1193.1 121.9 Z" fill="#3a78d4"/><path d="M1191.7 129.2 L1193.1 121.9 A7.4 7.4 0 0 1 1199 130.4 Z" fill="#d63a30"/><path d="M1191.7 129.2 L1184.4 130.4 A7.4 7.4 0 0 0 1191.1 136.6 Z" fill="#35a83c"/><path d="M1191.7 129.2 L1199 130.4 A7.4 7.4 0 0 1 1191.1 136.6 Z" fill="#f0d85a"/><circle cx="1189.7" cy="125.6" r="2.4" fill="#fff" fill-opacity="0.35"/></g>
<!-- view settings -->
<g><rect x="1223.4" y="124.4" width="17.4" height="11.4" rx="0.6" fill="#c6d6de" stroke="#66767f" stroke-width="1.3"/><path d="M1232.1 136.4 V139" stroke="#3a3a3a" stroke-width="1.8" stroke-linecap="butt"/><path d="M1227.8 139.6 H1236.4" stroke="#3a3a3a" stroke-width="1.6" stroke-linecap="butt"/></g>
<!-- arrows -->
<g fill="#9296a6"><path d="M1062.6 130.6 h5.4 l-2.7 2.8 z"/><path d="M1102.7 130.6 h5.4 l-2.7 2.8 z"/><path d="M1142.6 130.6 h5.4 l-2.7 2.8 z"/><path d="M1208.7 130.6 h5.4 l-2.7 2.8 z"/><path d="M1248.8 130.6 h5.4 l-2.7 2.8 z"/></g>
</g></svg>
</body></html>
